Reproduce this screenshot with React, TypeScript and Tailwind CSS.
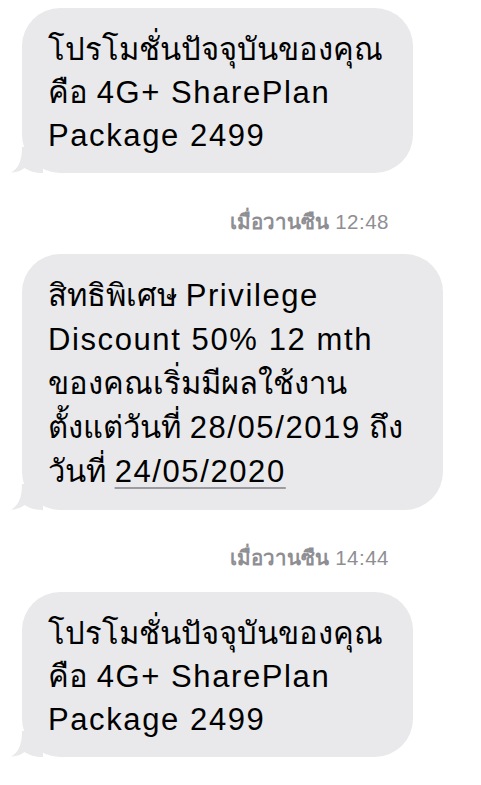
import React from "react";

const Tail = () => (
  <svg
    className="absolute -left-[11px] bottom-0"
    width="32"
    height="26"
    viewBox="0 0 32 26"
  >
    <path d="M32 0 L32 26 C24 26 18 24 13.5 21 C9 24.5 4.5 25.5 0 25.5 C6.5 22.5 11 15 11 0 Z" fill="#e9e9eb" />
  </svg>
);

const En = ({ children }: { children: React.ReactNode }) => (
  <span className="tracking-[1.6px]">{children}</span>
);

const Bubble = ({
  width,
  leading,
  lines,
}: {
  width: string;
  leading: string;
  lines: React.ReactNode[];
}) => (
  <div className={`relative ${width} rounded-[38px] bg-[#e9e9eb] pl-[26px] pr-4 pt-[20px] pb-[16px]`}>
    <Tail />
    <div className={`relative text-[31px] ${leading} text-black`}>
      {lines.map((l, i) => (
        <div key={i} className="whitespace-nowrap">
          {l}
        </div>
      ))}
    </div>
  </div>
);

const Stamp = ({ time }: { time: string }) => (
  <div className="flex justify-end pr-[92px] text-[20.5px] leading-6 text-[#8e8e93]">
    <span className="font-semibold">เมื่อวานซืน</span>
    <span className="ml-[6px] tracking-[0.5px]">{time}</span>
  </div>
);

const current = [
  "โปรโมชั่นปัจจุบันของคุณ",
  <>
    คือ <En>4G+ SharePlan</En>
  </>,
  <En>Package 2499</En>,
];

export default function App() {
  return (
    <div
      className="h-[785px] w-[481px] overflow-hidden bg-white pl-[22px] pt-2"
      style={{ fontFamily: '"Liberation Sans", "Noto Sans", sans-serif' }}
    >
      <Bubble width="w-[391px]" leading="leading-[43px]" lines={current} />
      <div className="mt-[37px] mb-[20px]">
        <Stamp time="12:48" />
      </div>
      <Bubble
        width="w-[421px]"
        leading="leading-[44px]"
        lines={[
          <>
            สิทธิพิเศษ <En>Privilege</En>
          </>,
          <En>Discount 50% 12 mth</En>,
          "ของคณเริ่มมีผลใช้งาน",
          <>
            ตั้งแต่วันที่ <En>28/05/2019</En> ถึง
          </>,
          <>
            วันที่{" "}
            <span className="tracking-[1.6px] underline decoration-[#9a9aa0] decoration-2 underline-offset-[5px]">
              24/05/2020
            </span>
          </>,
        ]}
      />
      <div className="mt-[36px] mb-[22px]">
        <Stamp time="14:44" />
      </div>
      <Bubble width="w-[391px]" leading="leading-[43px]" lines={current} />
    </div>
  );
}
